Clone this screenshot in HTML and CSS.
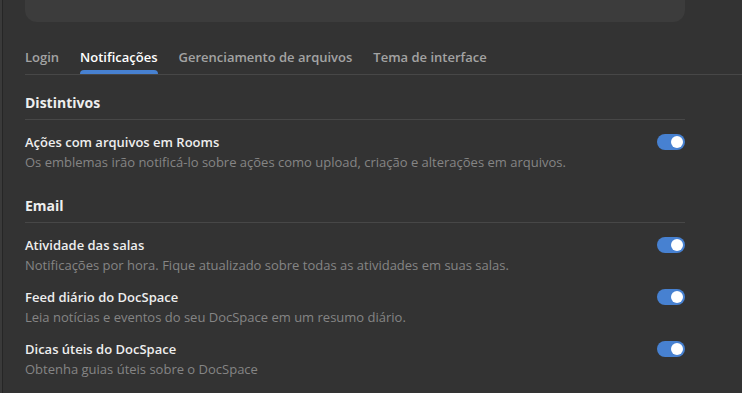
FILE: index.html
```html
<!DOCTYPE html>
<html lang="pt">
<head>
    <meta charset="UTF-8">
    <meta name="viewport" content="width=device-width, initial-scale=1.0">
    <title>Notificações</title>
    <link rel="stylesheet" href="styles.css">
</head>
<body>
    <div class="edge"></div>

    <div class="page">
        <!-- card from the block above (cut off) -->
        <div class="top-card"></div>

        <!-- Tabs -->
        <div class="tabs">
            <div class="tab">Login</div>
            <div class="tab active">Notificações</div>
            <div class="tab">Gerenciamento de arquivos</div>
            <div class="tab">Tema de interface</div>
        </div>

        <div class="content">
            <div class="section">
                <div class="section-title">Distintivos</div>
                <div class="setting">
                    <div class="setting-text">
                        <div class="setting-title">Ações com arquivos em Rooms</div>
                        <div class="setting-desc">Os emblemas irão notificá-lo sobre ações como upload, criação e alterações em arquivos.</div>
                    </div>
                    <div class="toggle on"><span class="knob"></span></div>
                </div>
            </div>

            <div class="section">
                <div class="section-title">Email</div>
                <div class="setting">
                    <div class="setting-text">
                        <div class="setting-title">Atividade das salas</div>
                        <div class="setting-desc">Notificações por hora. Fique atualizado sobre todas as atividades em suas salas.</div>
                    </div>
                    <div class="toggle on"><span class="knob"></span></div>
                </div>
                <div class="setting">
                    <div class="setting-text">
                        <div class="setting-title">Feed diário do DocSpace</div>
                        <div class="setting-desc">Leia notícias e eventos do seu DocSpace em um resumo diário.</div>
                    </div>
                    <div class="toggle on"><span class="knob"></span></div>
                </div>
                <div class="setting">
                    <div class="setting-text">
                        <div class="setting-title">Dicas úteis do DocSpace</div>
                        <div class="setting-desc">Obtenha guias úteis sobre o DocSpace</div>
                    </div>
                    <div class="toggle on"><span class="knob"></span></div>
                </div>
            </div>
        </div>
    </div>
</body>
</html>
```

FILE: styles.css
```css
body {
    font-family: "Open Sans", "Liberation Sans", sans-serif;
    margin: 0;
    padding: 0;
    background-color: #333333;
    color: #eeeeee;
    display: flex;
    height: 100vh;
    overflow: hidden;
}

.edge {
    width: 2px;
    background: #3a3a3a;
    border-right: 1px solid #262626;
    flex-shrink: 0;
}

.page {
    flex: 1;
    padding-left: 22px;
}

.top-card {
    width: 660px;
    height: 22px;
    background: #3c3c3c;
    border-radius: 0 0 12px 12px;
}

/* Tabs */
.tabs {
    display: flex;
    gap: 21px;
    margin-top: 26px;
    border-bottom: 1px solid #474747;
}

.tab {
    position: relative;
    font-size: 13px;
    font-weight: 600;
    line-height: 19px;
    color: #a3a3a3;
    padding-bottom: 7px;
}

.tab.active {
    color: #ffffff;
}

.tab.active::after {
    content: "";
    position: absolute;
    left: 0;
    right: 0;
    bottom: 0;
    height: 4px;
    background: #4781d1;
    border-radius: 4px 4px 0 0;
}

/* Sections */
.content {
    width: 660px;
    padding-top: 17px;
}

.section {
    margin-bottom: 23px;
}

.section-title {
    font-size: 14px;
    font-weight: 700;
    line-height: 22px;
    padding-bottom: 5px;
    border-bottom: 1px solid #474747;
    margin-bottom: 12px;
}

.setting {
    display: flex;
    justify-content: space-between;
    align-items: flex-start;
    margin-bottom: 12px;
}

.setting-title {
    font-size: 13px;
    font-weight: 600;
    line-height: 20px;
}

.setting-desc {
    font-size: 13px;
    line-height: 20px;
    color: #858585;
}

.toggle {
    width: 28px;
    height: 16px;
    border-radius: 8px;
    background: #4781d1;
    position: relative;
    margin-top: 2px;
}

.knob {
    position: absolute;
    top: 2px;
    right: 2px;
    width: 12px;
    height: 12px;
    border-radius: 50%;
    background: #ffffff;
}
```
